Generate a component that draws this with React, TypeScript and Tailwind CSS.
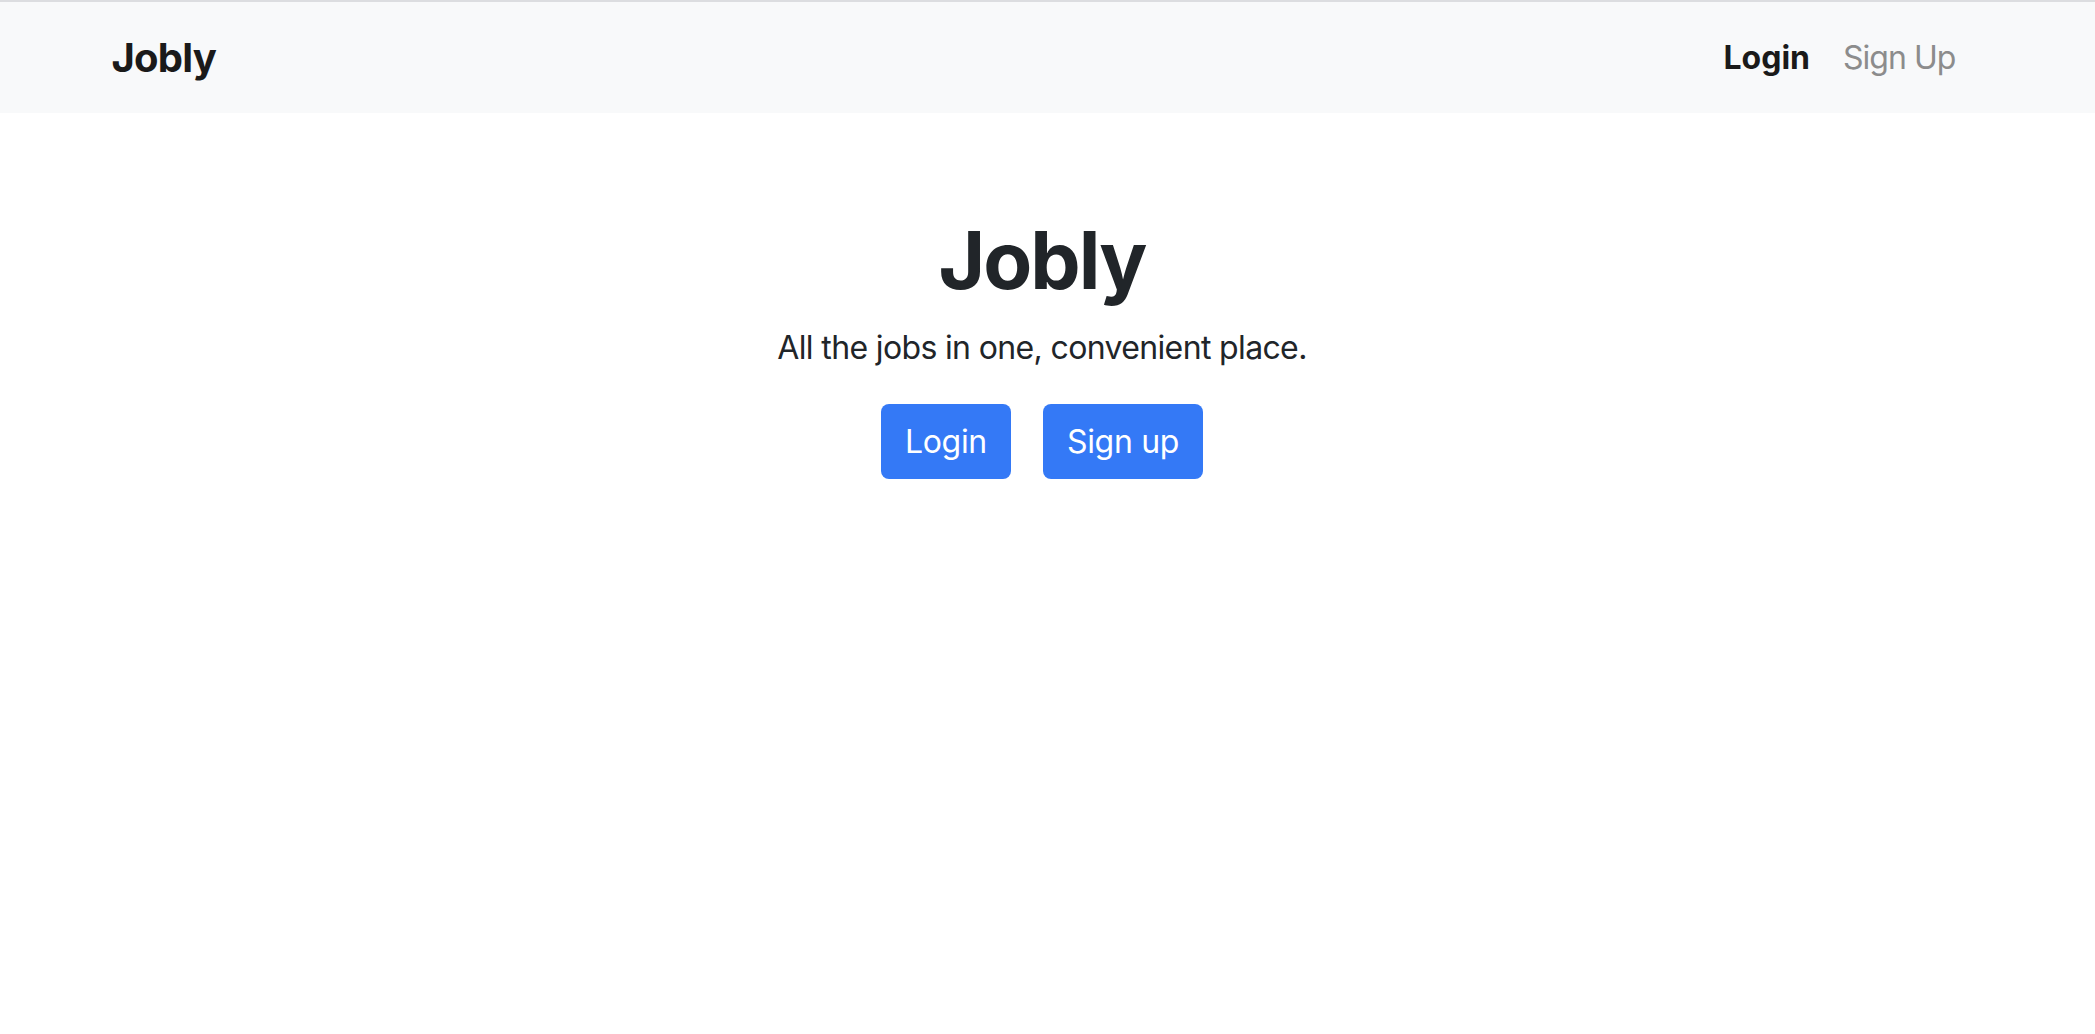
import React from "react";

const font = { fontFamily: "Inter, 'Noto Sans', sans-serif" };

function NavBar() {
  return (
    <nav className="border-t-2 border-[#dcdde0] bg-[#f8f9fa]">
      <div className="mx-auto flex h-[111px] w-[1920px] max-w-full items-center justify-between px-6">
        <a href="#" className="text-[40px] font-bold leading-none tracking-[-0.02em] text-[#1a1a1a]">
          Jobly
        </a>
        <div className="flex items-center gap-[33px] pr-[28px] text-[32px] leading-none">
          <a href="#" className="font-bold text-[#1a1a1a]">
            Login
          </a>
          <a href="#" className="tracking-[-0.03em] text-[#8c8c8c]">
            Sign Up
          </a>
        </div>
      </div>
    </nav>
  );
}

function Hero() {
  return (
    <div className="mt-[99px] flex flex-col items-center pr-[11px] text-center text-[#212529]">
      <h1 className="mb-4 text-[80px] font-bold leading-[1.2] tracking-[-0.025em]">Jobly</h1>
      <p className="mb-8 text-[32px] leading-[1.5] tracking-[-0.02em]">
        All the jobs in one, convenient place.
      </p>
      <div className="flex gap-8">
        <button className="flex h-[75px] items-center rounded-lg bg-[#3479f6] px-6 text-[32px] tracking-[-0.01em] text-white">
          Login
        </button>
        <button className="flex h-[75px] items-center rounded-lg bg-[#3479f6] px-6 text-[32px] tracking-[-0.01em] text-white">
          Sign up
        </button>
      </div>
    </div>
  );
}

export default function App() {
  return (
    <div className="min-h-screen bg-white" style={font}>
      <NavBar />
      <Hero />
    </div>
  );
}
